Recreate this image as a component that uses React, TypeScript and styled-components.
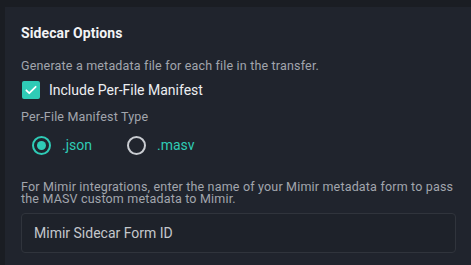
import React, { useState } from "react";
import styled, { createGlobalStyle } from "styled-components";

const GlobalStyle = createGlobalStyle`
    html, body {
        margin: 0;
        padding: 0;
        background-color: #1a1d23;
        font-family: Roboto, "Liberation Sans", sans-serif;
    }
`;

const Page = styled.div`
    padding: 7px 0 0 5px;
    height: 265px;
    box-sizing: border-box;
    overflow: hidden;
`;

const Panel = styled.section`
    background-color: #20242d;
    padding: 17px 15px 20px 16px;
    height: 100%;
    box-sizing: border-box;
`;

const Title = styled.h2`
    margin: 0;
    font-size: 14px;
    font-weight: 700;
    color: #f2f3f5;
    line-height: 18px;
    letter-spacing: 0.1px;
`;

const Help = styled.p`
    margin: 0;
    font-size: 12.5px;
    color: #a2a6ad;
    line-height: 12px;
    letter-spacing: 0.18px;
`;

const Description = styled(Help)`
    margin-top: 16px;
    line-height: 16px;
`;

const CheckRow = styled.label`
    display: flex;
    align-items: center;
    gap: 9px;
    margin-top: 5px;
    height: 22px;
    font-size: 14px;
    color: #eceef1;
    cursor: pointer;
`;

const CheckBox = styled.span<{ $checked: boolean }>`
    width: 18px;
    height: 18px;
    margin-left: 1px;
    border-radius: 2px;
    background-color: ${(p) => (p.$checked ? "#2fcbb6" : "transparent")};
    border: ${(p) => (p.$checked ? "none" : "2px solid #a2a6ad")};
    display: flex;
    align-items: center;
    justify-content: center;
`;

const FieldLabel = styled(Help)`
    margin-top: 8px;
    line-height: 16px;
`;

const RadioGroup = styled.div`
    display: flex;
    gap: 35px;
    margin-top: 8px;
    padding-left: 11px;
    height: 24px;
    align-items: center;
`;

const RadioOption = styled.label`
    display: flex;
    align-items: center;
    gap: 11px;
    font-size: 14px;
    color: #2fcbb6;
    cursor: pointer;
`;

const RadioCircle = styled.span<{ $checked: boolean }>`
    width: 19px;
    height: 19px;
    box-sizing: border-box;
    border-radius: 50%;
    border: 2px solid ${(p) => (p.$checked ? "#2fcbb6" : "#c9ccd1")};
    display: flex;
    align-items: center;
    justify-content: center;

    &::after {
        content: "";
        width: 9px;
        height: 9px;
        border-radius: 50%;
        background-color: #2fcbb6;
        display: ${(p) => (p.$checked ? "block" : "none")};
    }
`;

const Note = styled(Help)`
    margin-top: 24px;
`;

const TextInput = styled.input`
    display: block;
    margin-top: 8px;
    width: 100%;
    height: 40px;
    box-sizing: border-box;
    background-color: #1e222a;
    border: 1px solid #30343c;
    border-radius: 4px;
    padding: 0 12px;
    font-family: Roboto, "Liberation Sans", sans-serif;
    font-size: 14px;
    color: #eceef1;
    outline: none;

    &::placeholder {
        color: #c4c7cc;
    }
`;

export default function App() {
    const [manifest, setManifest] = useState(true);
    const [type, setType] = useState("json");

    return (
        <>
            <GlobalStyle />
            <Page>
                <Panel>
                    <Title>Sidecar Options</Title>
                    <Description>Generate a metadata file for each file in the transfer.</Description>
                    <CheckRow onClick={() => setManifest(!manifest)}>
                        <CheckBox $checked={manifest}>
                            {manifest && (
                                <svg width="14" height="14" viewBox="0 0 24 24" fill="none">
                                    <path d="M4 12.5l5 5L20 6.5" stroke="#ffffff" strokeWidth="3" strokeLinecap="round" strokeLinejoin="round" />
                                </svg>
                            )}
                        </CheckBox>
                        Include Per-File Manifest
                    </CheckRow>
                    <FieldLabel>Per-File Manifest Type</FieldLabel>
                    <RadioGroup>
                        {["json", "masv"].map((t) => (
                            <RadioOption key={t} onClick={() => setType(t)}>
                                <RadioCircle $checked={type === t} />
                                .{t}
                            </RadioOption>
                        ))}
                    </RadioGroup>
                    <Note>
                        For Mimir integrations, enter the name of your Mimir metadata form to pass the MASV custom metadata to Mimir.
                    </Note>
                    <TextInput placeholder="Mimir Sidecar Form ID" />
                </Panel>
            </Page>
        </>
    );
}
